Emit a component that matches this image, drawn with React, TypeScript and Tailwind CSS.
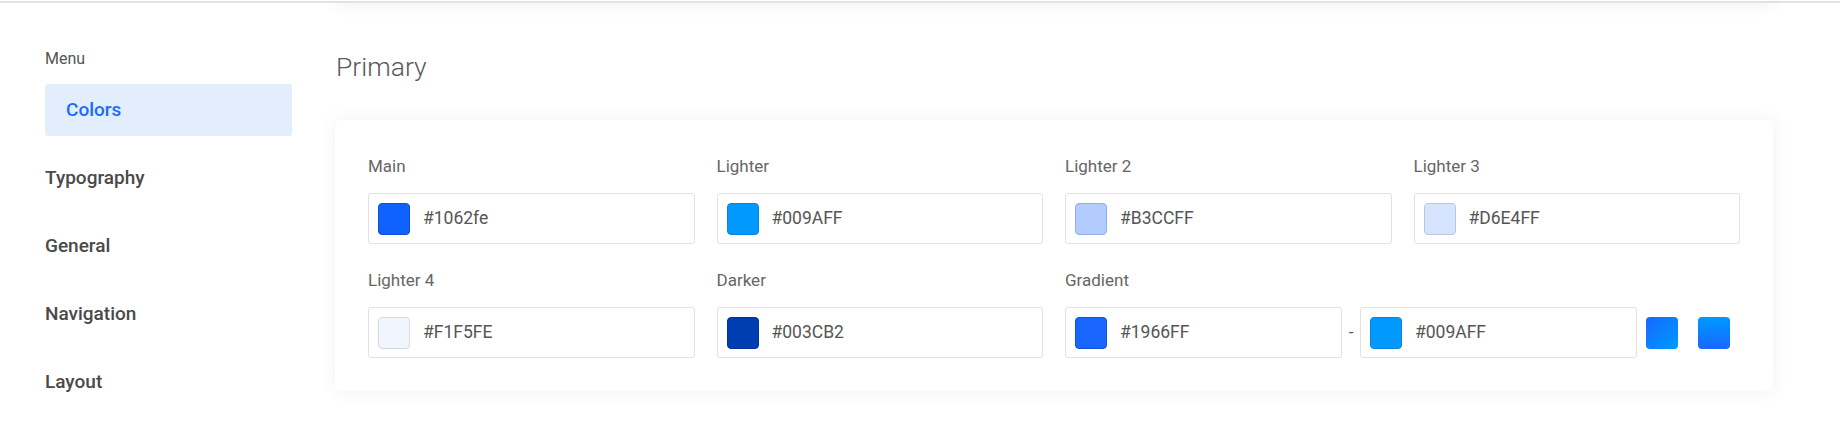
import React from "react";

type Cell = { label: string; hex: string; sw: string };

const row1: Cell[] = [
  { label: "Main", hex: "#1062fe", sw: "bg-[#1062fe] border-[#0b4fd6]" },
  { label: "Lighter", hex: "#009AFF", sw: "bg-[#009aff] border-[#0a84e0]" },
  { label: "Lighter 2", hex: "#B3CCFF", sw: "bg-[#b3ccff] border-[#93aee6]" },
  { label: "Lighter 3", hex: "#D6E4FF", sw: "bg-[#d6e4ff] border-[#b9c6e0]" },
];

const row2: Cell[] = [
  { label: "Lighter 4", hex: "#F1F5FE", sw: "bg-[#f1f5fe] border-[#d6d9e0]" },
  { label: "Darker", hex: "#003CB2", sw: "bg-[#003cb2] border-[#00349c]" },
];

function ColorInput({ hex, sw, className = "" }: { hex: string; sw: string; className?: string }) {
  return (
    <div
      className={`flex h-[51px] items-center rounded-[3px] border border-[#e2e2e2] bg-white pl-[9px] ${className}`}
    >
      <span className={`h-[32px] w-[32px] shrink-0 rounded-[4px] border ${sw}`} />
      <span className="ml-[13px] text-[17.5px] text-[#555]">{hex}</span>
    </div>
  );
}

function Label({ children }: { children: React.ReactNode }) {
  return <div className="flex h-[28px] items-center text-[17px] text-[#666]">{children}</div>;
}

export default function App() {
  const menu = ["Typography", "General", "Navigation", "Layout"];
  return (
    <div className="relative h-[428px] w-[1840px] overflow-hidden bg-white font-['Roboto','Liberation_Sans',sans-serif]">
      <div className="flex">
        <aside className="ml-[45px] w-[247px] pt-[47px]">
          <div className="flex h-[24px] items-center text-[16px] text-[#555]">Menu</div>
          <nav className="mt-[13px] flex flex-col gap-[16px]">
            <div className="flex h-[52px] items-center rounded-[3px] bg-[#e3eefc] px-[21px] text-[19px] font-medium text-[#1a6aff]">
              Colors
            </div>
            {menu.map((m) => (
              <div key={m} className="flex h-[52px] items-center text-[19px] font-medium text-[#4a4a4a]">
                {m}
              </div>
            ))}
          </nav>
        </aside>

        <main className="ml-[43px] w-[1438px]">
          <div className="-mt-[20px] h-[22px] rounded-b-[6px] bg-white shadow-[0_2px_18px_rgba(0,0,0,0.07)]" />
          <h2 className="mt-[49px] flex h-[32px] items-center pl-[1px] text-[26.5px] font-light text-[#595959]">
            Primary
          </h2>
          <section className="mt-[37px] rounded-[6px] bg-white p-[33px] shadow-[0_0_20px_rgba(0,0,0,0.06)]">
            <div className="grid grid-cols-4 gap-x-[22px] gap-y-[23px]">
              {row1.map((c) => (
                <div key={c.label}>
                  <Label>{c.label}</Label>
                  <ColorInput hex={c.hex} sw={c.sw} className="mt-[12px]" />
                </div>
              ))}
              {row2.map((c) => (
                <div key={c.label}>
                  <Label>{c.label}</Label>
                  <ColorInput hex={c.hex} sw={c.sw} className="mt-[12px]" />
                </div>
              ))}
              <div className="col-span-2">
                <Label>Gradient</Label>
                <div className="mt-[12px] flex items-center">
                  <ColorInput hex="#1966FF" sw="bg-[#1966ff] border-[#1252d6]" className="min-w-0 flex-1" />
                  <span className="w-[18px] text-center text-[17px] text-[#555]">-</span>
                  <ColorInput hex="#009AFF" sw="bg-[#009aff] border-[#0a84e0]" className="min-w-0 flex-1" />
                  <span className="ml-[9px] h-[32px] w-[32px] shrink-0 rounded-[4px] bg-gradient-to-br from-[#1966ff] to-[#009aff]" />
                  <span className="ml-[20px] mr-[10px] h-[32px] w-[32px] shrink-0 rounded-[4px] bg-gradient-to-b from-[#009aff] to-[#1966ff]" />
                </div>
              </div>
            </div>
          </section>
        </main>
      </div>
      <div className="absolute inset-x-0 top-[1px] h-[2px] bg-[#e2e2e2]" />
    </div>
  );
}
